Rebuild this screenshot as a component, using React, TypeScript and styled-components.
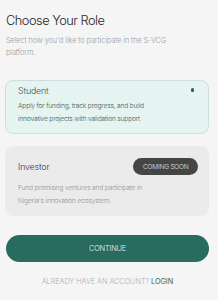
import React from "react";
import styled, { createGlobalStyle } from "styled-components";

const Global = createGlobalStyle`
  html, body { margin: 0; padding: 0; background: #f5f5f5; }
  * { box-sizing: border-box; }
`;

const Page = styled.div`
  width: 218px;
  height: 300px;
  background: #f5f5f5;
  font-family: Inter, "Noto Sans", sans-serif;
  padding: 13px 9px 0 6px;
  display: flex;
  flex-direction: column;
`;

const Title = styled.h1`
  margin: 0;
  font-size: 12.8px;
  font-weight: 300;
  color: #262626;
  letter-spacing: -0.5px;
  line-height: 16px;
`;

const Subtitle = styled.p`
  margin: 5.5px 0 0 0;
  font-size: 7.35px;
  font-weight: 300;
  line-height: 12.5px;
  color: #9c9c9c;
  letter-spacing: -0.1px;
`;

const Card = styled.div<{ $active?: boolean }>`
  margin: ${(p) => (p.$active ? "20.5px" : "12px")} 0 0 -1px;
  border-radius: 8px;
  background: ${(p) => (p.$active ? "#e5f3f1" : "#ebebeb")};
  border: 1px solid ${(p) => (p.$active ? "#cbe0dc" : "#ebebeb")};
  padding: ${(p) => (p.$active ? "3px 11px 8px 12px" : "11px 10px 8px 12px")};
  display: flex;
  flex-direction: column;
`;

const CardHead = styled.div<{ $active?: boolean }>`
  display: flex;
  align-items: center;
  justify-content: space-between;
  height: ${(p) => (p.$active ? "12px" : "17px")};
`;

const CardTitle = styled.span<{ $active?: boolean }>`
  font-size: 8.8px;
  font-weight: 300;
  letter-spacing: -0.15px;
  color: ${(p) => (p.$active ? "#245f55" : "#333333")};
`;

const Dot = styled.span`
  width: 3.5px;
  height: 3.5px;
  border-radius: 50%;
  background: #2a5a52;
  margin-right: 3px;
`;

const Badge = styled.span`
  background: #454545;
  color: #e6e6e6;
  font-size: 6.5px;
  font-weight: 300;
  border-radius: 9px;
  height: 17px;
  padding: 0 9.5px;
  display: flex;
  align-items: center;
  letter-spacing: -0.2px;
`;

const CardText = styled.p<{ $active?: boolean }>`
  margin: ${(p) => (p.$active ? "4px" : "7px")} 0 0 0;
  font-size: 6.7px;
  line-height: 12.5px;
  font-weight: 300;
  color: ${(p) => (p.$active ? "#4a5a57" : "#959595")};
  letter-spacing: -0.2px;
`;

const Button = styled.button`
  margin-top: 19px;
  height: 27px;
  border: none;
  border-radius: 14px;
  background: #286b5f;
  color: #e8f2f0;
  font-family: Inter, "Noto Sans", sans-serif;
  font-size: 7.4px;
  font-weight: 300;
  letter-spacing: -0.2px;
  width: 100%;
  padding: 0;
`;

const Footer = styled.div`
  margin-top: 15px;
  line-height: 10px;
  text-align: center;
  font-size: 7.3px;
  font-weight: 300;
  color: #b0b0b0;
  letter-spacing: -0.05px;
`;

const Login = styled.span`
  color: #2f6a60;
  font-weight: 400;
`;

export default function App() {
  return (
    <>
      <Global />
      <Page>
        <Title>Choose Your Role</Title>
        <Subtitle>
          Select how you'd like to participate in the S-VCG
          <br />
          platform.
        </Subtitle>
        <Card $active>
          <CardHead $active>
            <CardTitle $active>Student</CardTitle>
            <Dot />
          </CardHead>
          <CardText $active>
            Apply for funding, track progress, and build
            <br />
            innovative projects with validation support
          </CardText>
        </Card>
        <Card>
          <CardHead>
            <CardTitle>Investor</CardTitle>
            <Badge>COMING SOON</Badge>
          </CardHead>
          <CardText>
            Fund promising ventures and participate in
            <br />
            Nigeria's innovation ecosystem.
          </CardText>
        </Card>
        <Button>CONTINUE</Button>
        <Footer>
          ALREADY HAVE AN ACCOUNT? <Login>LOGIN</Login>
        </Footer>
      </Page>
    </>
  );
}
